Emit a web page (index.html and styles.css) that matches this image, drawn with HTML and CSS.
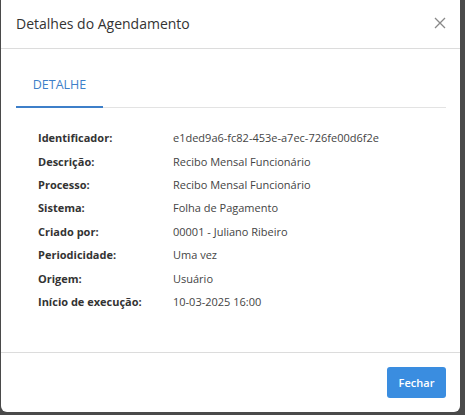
FILE: index.html
```html
<!DOCTYPE html>
<html lang="pt">
<head>
<meta charset="utf-8">
<link rel="stylesheet" href="styles.css">
</head>
<body>
<div class="modal">
  <div class="modal-header">
    <h1 class="modal-title">Detalhes do Agendamento</h1>
    <button class="close" aria-label="Fechar">
      <svg width="12" height="12" viewBox="0 0 12 12"><path d="M1 1L11 11M11 1L1 11" stroke="#888" stroke-width="1.3" fill="none"/></svg>
    </button>
  </div>
  <div class="modal-body">
    <div class="tabs">
      <div class="tab active">DETALHE</div>
    </div>
    <dl class="details">
      <div class="row"><dt>Identificador:</dt><dd>e1ded9a6-fc82-453e-a7ec-726fe00d6f2e</dd></div>
      <div class="row"><dt>Descrição:</dt><dd>Recibo Mensal Funcionário</dd></div>
      <div class="row"><dt>Processo:</dt><dd>Recibo Mensal Funcionário</dd></div>
      <div class="row"><dt>Sistema:</dt><dd>Folha de Pagamento</dd></div>
      <div class="row"><dt>Criado por:</dt><dd>00001 - Juliano Ribeiro</dd></div>
      <div class="row"><dt>Periodicidade:</dt><dd>Uma vez</dd></div>
      <div class="row"><dt>Origem:</dt><dd>Usuário</dd></div>
      <div class="row"><dt>Início de execução:</dt><dd>10-03-2025 16:00</dd></div>
    </dl>
  </div>
  <div class="modal-footer">
    <button class="btn">Fechar</button>
  </div>
</div>
</body>
</html>
```
FILE: styles.css
```css
* { box-sizing: border-box; }
html, body { margin: 0; padding: 0; }
body {
  background: #4a4a4a;
  width: 465px;
  height: 415px;
  font-family: "Open Sans", "Noto Sans", sans-serif;
  color: #333;
  overflow: hidden;
}
.modal {
  margin-left: 1px;
  width: 459px;
  height: 412px;
  background: #fff;
  border-radius: 0 0 6px 6px;
  display: flex;
  flex-direction: column;
}
.modal-header {
  height: 49px;
  border-bottom: 1px solid #dcdcdc;
  display: flex;
  align-items: center;
  justify-content: space-between;
  padding: 0 13px 0 15px;
}
.modal-title {
  margin: 0;
  font-size: 14px;
  font-weight: 400;
  color: #333;
  padding-bottom: 2px;
}
.close {
  border: 0;
  background: none;
  padding: 0;
  width: 14px;
  height: 14px;
  display: flex;
  align-items: center;
  justify-content: center;
  margin-bottom: 2px;
}
.modal-body {
  flex: 1;
  padding: 16px 14px 0 15px;
  border-bottom: 1px solid #dcdcdc;
}
.tabs {
  display: flex;
  border-bottom: 1px solid #e3e3e3;
  height: 43px;
}
.tab {
  width: 87px;
  font-size: 12.5px;
  color: #3d7fc9;
  text-align: center;
  line-height: 40px;
  border-bottom: 2px solid #3d7fc9;
  margin-bottom: -1px;
}
.details {
  margin: 18px 0 0 22px;
  padding: 0;
  display: flex;
  flex-direction: column;
}
.row {
  display: flex;
  height: 23.4px;
  align-items: center;
  font-size: 11px;
}
dt {
  width: 135px;
  font-weight: 700;
  color: #333;
}
dd {
  margin: 0;
  color: #444;
}
.modal-footer {
  height: 59px;
  display: flex;
  justify-content: flex-end;
  align-items: center;
  padding: 0 14px 0 0;
}
.btn {
  width: 59px;
  height: 31px;
  border: 0;
  border-radius: 3px;
  background: #3a8de0;
  color: #fff;
  font-family: "Open Sans", "Noto Sans", sans-serif;
  font-weight: 600;
  font-size: 11px;
  padding: 0;
}
```
